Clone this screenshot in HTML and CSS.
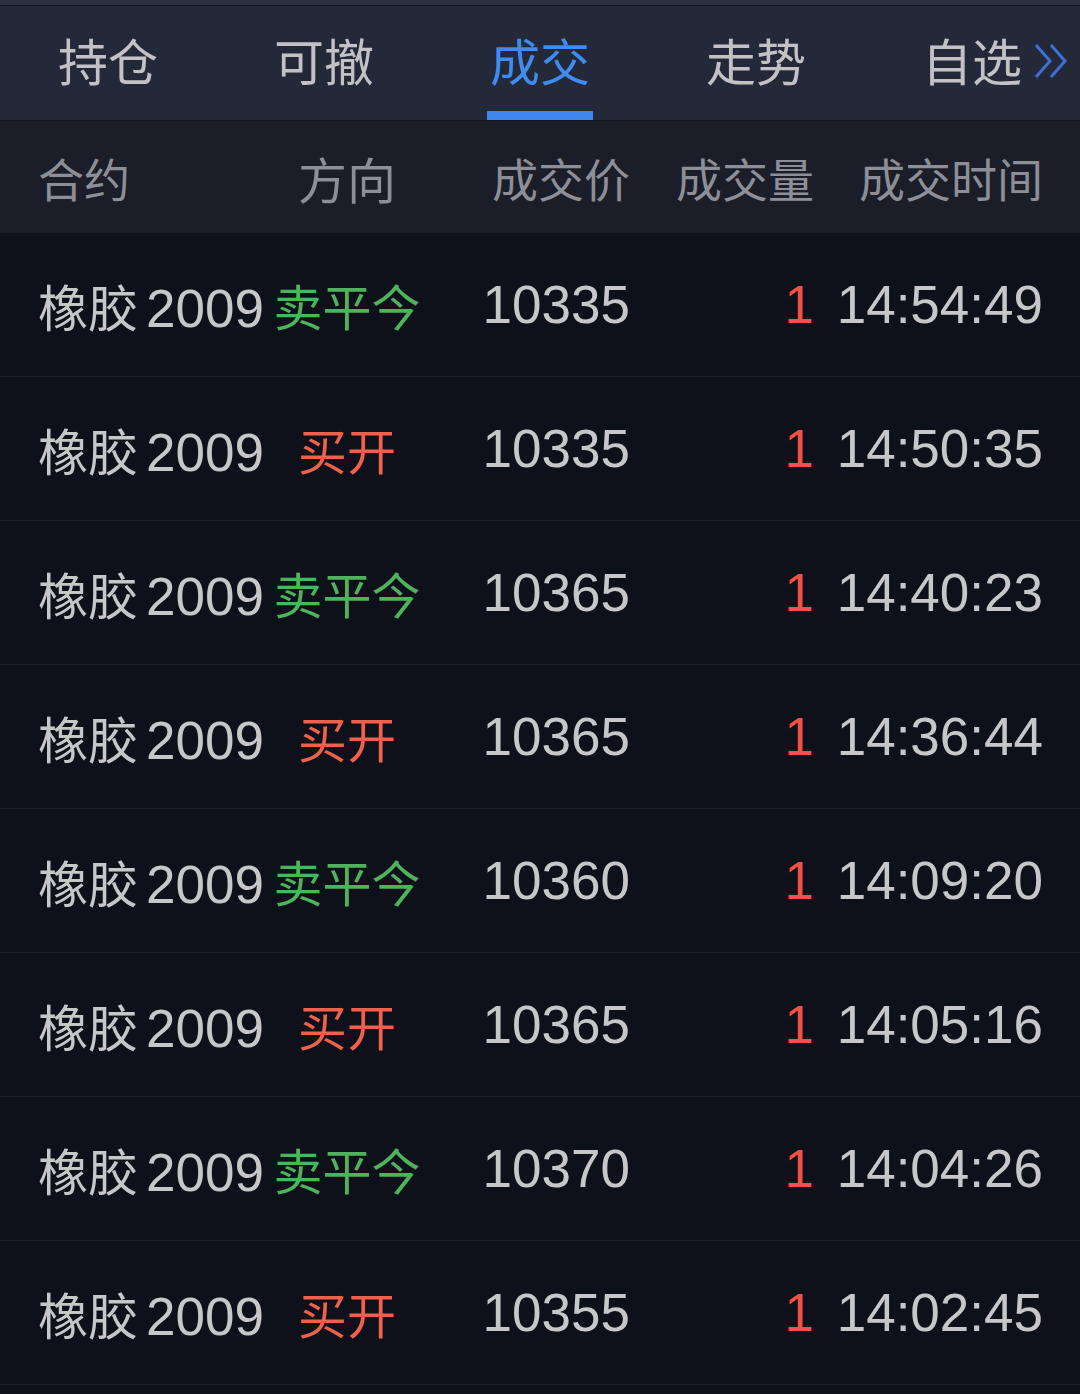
FILE: index.html
```html
<!DOCTYPE html>
<html lang="zh-CN">
<head>
    <meta charset="UTF-8">
    <meta name="viewport" content="width=device-width, initial-scale=1.0">
    <title>成交</title>
    <link rel="stylesheet" href="styles.css">
</head>
<body>
    <div class="tabs">
        <div class="tab">持仓</div>
        <div class="tab">可撤</div>
        <div class="tab active">成交</div>
        <div class="tab">走势</div>
        <div class="tab"><span class="tab-label">自选<svg class="more" width="34" height="36" viewBox="0 0 34 36"><path d="M2 2 L16 18 L2 34 M17 2 L31 18 L17 34" fill="none" stroke="#3b70d6" stroke-width="3"/></svg></span></div>
    </div>

    <div class="grid head">
        <div>合约</div>
        <div class="dir">方向</div>
        <div class="num">成交价</div>
        <div class="num">成交量</div>
        <div class="num">成交时间</div>
    </div>

    <div id="trades"></div>

    <script>
        const trades = [
            ['卖平今', '10335', '14:54:49'],
            ['买开', '10335', '14:50:35'],
            ['卖平今', '10365', '14:40:23'],
            ['买开', '10365', '14:36:44'],
            ['卖平今', '10360', '14:09:20'],
            ['买开', '10365', '14:05:16'],
            ['卖平今', '10370', '14:04:26'],
            ['买开', '10355', '14:02:45']
        ];

        const list = document.getElementById('trades');
        trades.forEach(t => {
            const row = document.createElement('div');
            row.className = 'grid row';
            const dirClass = t[0] === '买开' ? 'buy' : 'sell';
            row.innerHTML =
                '<div class="name">橡胶<span class="code">2009</span></div>' +
                `<div class="dir ${dirClass}">${t[0]}</div>` +
                `<div class="num">${t[1]}</div>` +
                '<div class="num qty">1</div>' +
                `<div class="num">${t[2]}</div>`;
            list.appendChild(row);
        });
    </script>
</body>
</html>
```

FILE: styles.css
```css
body {
    margin: 0;
    background-color: #0e1119;
    font-family: "Liberation Sans", "Noto Sans CJK SC", sans-serif;
    color: #c7c7ca;
    height: 1394px;
    overflow: hidden;
}
.tabs {
    display: grid;
    grid-template-columns: repeat(5, 1fr);
    height: 115px;
    background-color: #242939;
    border-top: 5px solid #2b3040;
    box-shadow: inset 0 1px 0 #161922;
}
.tab {
    position: relative;
    display: flex;
    align-items: center;
    justify-content: center;
    font-size: 50px;
    color: #c2c2c6;
    padding-bottom: 8px;
}
.tab.active {
    color: #3f8cf0;
}
.tab.active::after {
    content: "";
    position: absolute;
    left: 55px;
    width: 106px;
    bottom: 0;
    height: 9px;
    background-color: #3f86ee;
}
.tab-label {
    position: relative;
}
.more {
    position: absolute;
    left: 112px;
    top: 50%;
    margin-top: -16px;
}
.grid {
    display: grid;
    grid-template-columns: 234px 150px 208px 184px 229px;
    padding: 0 37px 0 38px;
    align-items: center;
    white-space: nowrap;
}
.head {
    height: 112px;
    background-color: #1b1e28;
    border-top: 1px solid #14171f;
    font-size: 46px;
    color: #8c8f97;
}
.row {
    height: 143px;
    border-bottom: 1px solid #1f232f;
    font-size: 53px;
}
.name {
    font-size: 50px;
}
.code {
    font-size: 53px;
    margin-left: 8px;
}
.dir {
    text-align: center;
    font-size: 49px;
}
.num {
    text-align: right;
}
.sell {
    color: #4fb25c;
}
.buy {
    color: #f0604a;
}
.qty {
    color: #ef5346;
}
```
